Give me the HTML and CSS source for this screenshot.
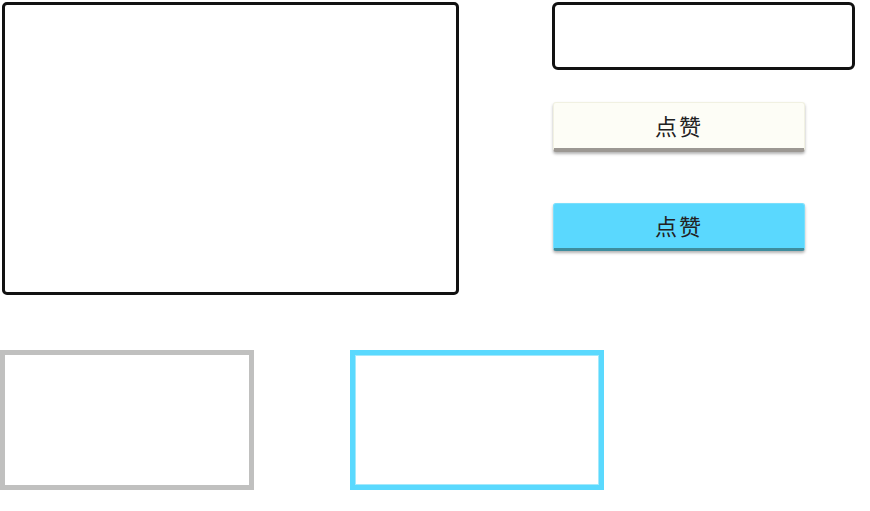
FILE: index.html
```html
<!DOCTYPE html>
<html lang="zh">
<head>
    <meta charset="UTF-8">
    <title>点赞</title>
    <link rel="stylesheet" href="styles.css">
</head>
<body>
    <div class="top">
        <div class="panel"></div>
        <div class="side">
            <div class="search"></div>
            <button class="btn btn-plain">点赞</button>
            <button class="btn btn-blue">点赞</button>
        </div>
    </div>
    <div class="bottom">
        <div class="box box-gray"></div>
        <div class="box box-blue"></div>
    </div>
</body>
</html>
```

FILE: styles.css
```css
*{
    margin:0;
    padding:0;
    box-sizing:border-box;
}
body{
    background:#FFF;
    font-family:"Noto Sans CJK SC","Noto Sans",sans-serif;
}
.top{
    display:flex;
    align-items:flex-start;
    padding:2px 0 0 2px;
}
.panel{
    width:457px;
    height:293px;
    border:3px solid #111;
    border-radius:5px;
}
.side{
    display:flex;
    flex-direction:column;
    align-items:flex-start;
    margin-left:93px;
}
.search{
    width:303px;
    height:68px;
    border:3px solid #111;
    border-radius:6px;
}
.btn{
    width:252px;
    height:50px;
    margin-left:1px;
    padding-bottom:2px;
    font-family:inherit;
    font-size:22px;
    letter-spacing:2px;
    color:#222;
    border:1px solid #f1f1e2;
    border-radius:3px;
    box-shadow:0 2px 3px rgba(0,0,0,.3);
}
.btn-plain{
    margin-top:32px;
    background:#fdfdf6;
    border-bottom:4px solid #9c9893;
}
.btn-blue{
    margin-top:51px;
    height:48px;
    background:#5ad8fe;
    border-color:#7adffc;
    border-bottom:3px solid #3e8d9e;
}
.bottom{
    display:flex;
    margin-top:55px;
}
.box{
    width:254px;
    height:140px;
    border:5px solid #c0c0bf;
}
.box-blue{
    margin-left:96px;
    border-color:#5ad9fe;
    box-shadow:inset 0 0 0 1px #a4e9fb;
}
```
